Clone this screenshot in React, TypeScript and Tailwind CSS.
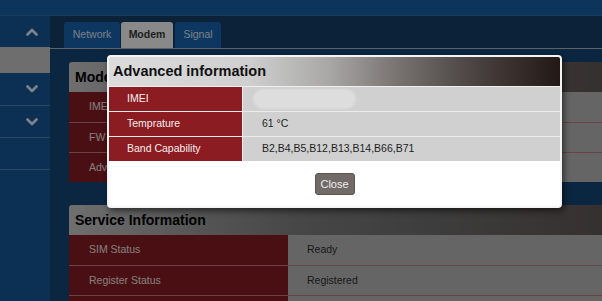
import React from 'react';

const font = { fontFamily: '"Liberation Sans", Arial, sans-serif' };

function Chevron({ up }: { up?: boolean }) {
  return (
    <svg width="12" height="8" viewBox="0 0 12 8" fill="none">
      <polyline
        points={up ? '1.5,6.5 6,2 10.5,6.5' : '1.5,1.5 6,6 10.5,1.5'}
        stroke="#e6f0fb"
        strokeWidth="2.6"
        strokeLinecap="round"
        strokeLinejoin="round"
      />
    </svg>
  );
}

type Row = { label: string; value: string };

function Panel({ title, rows }: { title: string; rows: Row[] }) {
  return (
    <div className="w-[720px] shrink-0 rounded-tl-[3px] overflow-hidden">
      <div className="h-[30px] flex items-center pl-[6px] text-[14px] font-bold text-black bg-[linear-gradient(to_right,#cacaca_0px,#9b9b9b_131px,#818181_231px,#747474_331px,#625957_531px,#4a3c3a_720px)]">
        {title}
      </div>
      {rows.map((r, i) => (
        <div key={i} className={`flex h-[30px] ${i > 0 ? 'border-t border-[#c47a7d]' : ''}`}>
          <div className="w-[219px] bg-[#861d23] flex items-center pl-[20px] text-[10.5px] text-[#f3e4e4]">
            {r.label}
          </div>
          <div className="flex-1 bg-[#b9b9b9] flex items-center pl-[19px] text-[10.5px] text-[#2e2e2e]">
            {r.value}
          </div>
        </div>
      ))}
    </div>
  );
}

export default function App() {
  const advanced: Row[] = [
    { label: 'IMEI', value: '' },
    { label: 'Temprature', value: '61 °C' },
    { label: 'Band Capability', value: 'B2,B4,B5,B12,B13,B14,B66,B71' },
  ];

  return (
    <div className="relative w-[602px] h-[301px] overflow-hidden bg-[#144576]" style={font}>
      {/* page behind the dialog */}
      <div className="h-[16px] bg-[#1862a7] border-b border-[#316da7]" />
      <div className="flex h-[285px]">
        <aside className="w-[50px] shrink-0 bg-[#165799] flex flex-col">
          <div className="h-[31px] flex items-center justify-end pr-[12px]">
            <Chevron up />
          </div>
          <div className="h-[26px] bg-[#c8c8c8]" />
          <div className="h-[33px] flex items-center justify-end pr-[12px] border-b border-[#4f82b6]">
            <Chevron />
          </div>
          <div className="h-[32px] flex items-center justify-end pr-[12px] border-b border-[#4f82b6]">
            <Chevron />
          </div>
          <div className="h-[32px] border-b border-[#4f82b6]" />
        </aside>

        <main className="flex-1 min-w-0 overflow-hidden flex flex-col">
          <div className="h-[33px] bg-[#143e66] pt-[6px] pl-[14px] flex items-end gap-[1px] border-b border-[#a7b2bd]">
            <div className="h-[26px] w-[56px] rounded-t-[3px] bg-[#1864af] flex items-center justify-center text-[10.5px] text-[#dfe9f4]">
              Network
            </div>
            <div className="h-[26px] w-[52px] rounded-t-[3px] bg-[#fafafa] flex items-center justify-center text-[10.5px] font-bold text-[#3a3a3a]">
              Modem
            </div>
            <div className="h-[26px] w-[46px] ml-[1px] rounded-t-[3px] bg-[#1864af] flex items-center justify-center text-[10.5px] text-[#dfe9f4]">
              Signal
            </div>
          </div>

          <div className="pl-[19px] pt-[13px] flex flex-col gap-[23px]">
            <Panel
              title="Modem Information"
              rows={[
                { label: 'IMEI', value: '' },
                { label: 'FW Version', value: '' },
                { label: 'Advanced', value: '' },
              ]}
            />
            <Panel
              title="Service Information"
              rows={[
                { label: 'SIM Status', value: 'Ready' },
                { label: 'Register Status', value: 'Registered' },
                { label: '', value: '' },
              ]}
            />
          </div>
        </main>
      </div>

      {/* dim layer */}
      <div className="absolute inset-0 bg-black/45" />

      {/* dialog */}
      <div className="absolute left-[107px] top-[55px] w-[455px] rounded-[4px] border-2 border-[#f4f4f4] bg-white shadow-[2px_3px_6px_rgba(0,0,0,0.55)] overflow-hidden">
        <div className="h-[30px] border-b border-[#f0f0f0] flex items-center pl-[4px] text-[14.5px] font-bold text-[#111] bg-[linear-gradient(to_right,#dcdcdc_0%,#cfcfcf_31%,#a8a7a6_49%,#787270_64%,#56504e_76%,#3e3533_87%,#231816_100%)]">
          Advanced information
        </div>
        {advanced.map((r, i) => (
          <div key={r.label} className={`flex ${i > 0 ? 'h-[25px] border-t border-[#ececec]' : 'h-[24px]'}`}>
            <div className="w-[134px] border-r border-[#ececec] bg-[#8b1c22] flex items-center pl-[18px] text-[10.5px] text-[#f6eeee]">
              {r.label}
            </div>
            <div className="flex-1 bg-[#cfd0cf] flex items-center pl-[19px] text-[10.5px] text-[#1e1e1e]">
              {r.label === 'IMEI' ? (
                <div className="-ml-[9px] w-[103px] h-[20px] rounded-full bg-[#dcdddc] blur-[1px]" />
              ) : (
                r.value
              )}
            </div>
          </div>
        ))}
        <div className="h-[45px] flex justify-center pt-[12px]">
          <button className="w-[40px] h-[22px] rounded-[3px] bg-[#716a67] border border-[#5c5653] text-[11px] text-[#eeeeee]">
            Close
          </button>
        </div>
      </div>
    </div>
  );
}
